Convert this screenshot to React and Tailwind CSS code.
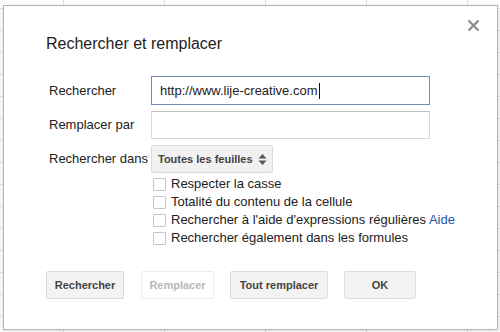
import React from "react";

function Checkbox({ children }) {
  return (
    <div className="flex h-[18px] items-center">
      <span className="box-border h-[13px] w-[13px] shrink-0 rounded-[1px] border border-[#c6c6c6] bg-white" />
      <span className="ml-[5px] text-[13px] leading-[18px] text-[#222]">{children}</span>
    </div>
  );
}

function Btn({ children, disabled, w }) {
  return (
    <button
      className={
        "box-border flex h-[28px] items-center justify-center rounded-[2px] border px-[8px] text-[11px] font-bold " +
        (disabled
          ? "border-[#ececec] bg-white text-[#b8b8b8]"
          : "border-[#dcdcdc] bg-[#f3f3f3] text-[#444]")
      }
      style={{ width: w }}
    >
      {children}
    </button>
  );
}

export default function App() {
  return (
    <div
      className="relative h-[332px] w-[500px] overflow-hidden bg-white bg-[linear-gradient(to_right,#dedede_1px,transparent_1px),linear-gradient(to_bottom,#e4e4e4_1px,transparent_1px)] bg-[size:101px_22px] bg-[position:63px_8px]"
      style={{ fontFamily: '"Liberation Sans", Arial, sans-serif' }}
    >
      <div className="absolute left-[3px] top-[5px] box-border h-[325px] w-[495px] border border-[#b5b5b5] bg-white shadow-[0_2px_6px_rgba(0,0,0,0.15)]">
        {/* close */}
        <svg
          className="absolute left-[463px] top-[13px]"
          width="13"
          height="13"
          viewBox="0 0 13 13"
        >
          <path d="M1.5 1.5 L11.5 11.5 M11.5 1.5 L1.5 11.5" stroke="#8a8a8a" strokeWidth="2.2" />
        </svg>

        <div className="pl-[42px] pt-[28px]">
          <div className="text-[16px] leading-[20px] text-[#222]">Rechercher et remplacer</div>

          <div className="mt-[22px] flex flex-col gap-[6px] pl-[3px]">
            <div className="flex items-center">
              <div className="w-[102px] text-[13px] text-[#222]">Rechercher</div>
              <div className="box-border flex h-[29px] w-[279px] items-center border border-[#6f90b6] bg-white pl-[8px] text-[13px] text-[#222]">
                http://www.lije-creative.com
                <span className="ml-[1px] inline-block h-[16px] w-[1px] bg-[#111]" />
              </div>
            </div>
            <div className="flex items-center">
              <div className="w-[102px] text-[13px] text-[#222]">Remplacer par</div>
              <div className="box-border h-[28px] w-[279px] border border-[#d9d9d9] border-t-[#c0c0c0] bg-white" />
            </div>
            <div className="flex items-center">
              <div className="w-[102px] text-[13px] text-[#222]">Rechercher dans</div>
              <div className="box-border flex h-[28px] w-[122px] items-center justify-between rounded-[2px] border border-[#dcdcdc] bg-[#f1f1f1] pl-[6px] pr-[5px] text-[11px] font-bold text-[#444]">
                <span>Toutes les feuilles</span>
                <svg width="9" height="13" viewBox="0 0 9 13">
                  <path d="M4.5 1 L8.5 5.5 L0.5 5.5 Z" fill="#555" />
                  <path d="M4.5 12 L8.5 7.5 L0.5 7.5 Z" fill="#555" />
                </svg>
              </div>
            </div>
          </div>

          <div className="ml-[107px] mt-[2px] flex flex-col">
            <Checkbox>Respecter la casse</Checkbox>
            <Checkbox>Totalité du contenu de la cellule</Checkbox>
            <Checkbox>
              Rechercher à l'aide d'expressions régulières <span className="text-[#1a57a8]">Aide</span>
            </Checkbox>
            <Checkbox>Rechercher également dans les formules</Checkbox>
          </div>

          <div className="mt-[24px] flex gap-[16px]">
            <Btn w={78}>Rechercher</Btn>
            <div className="ml-[1px]">
              <Btn w={73} disabled>
                Remplacer
              </Btn>
            </div>
            <Btn w={98}>Tout remplacer</Btn>
            <Btn w={72}>OK</Btn>
          </div>
        </div>
      </div>
    </div>
  );
}
